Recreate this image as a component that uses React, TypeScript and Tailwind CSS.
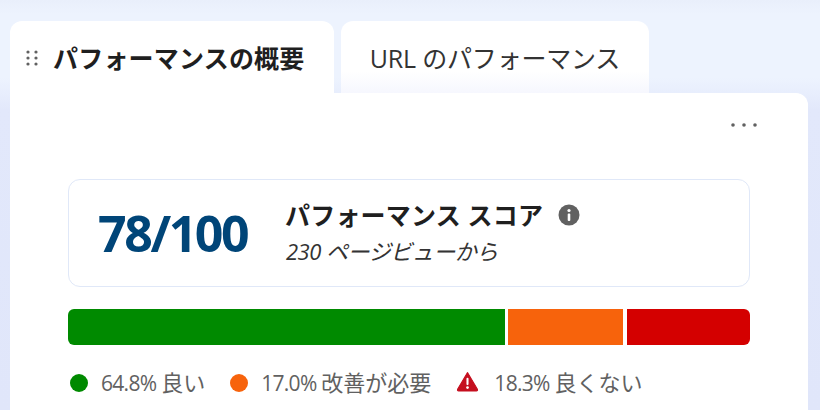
export default function App() {
  const sans = "font-['Open_Sans','Noto_Sans_CJK_JP',sans-serif]";
  const num = "text-[21px] tracking-[-0.7px]";
  return (
    <div className={`h-[410px] w-[820px] overflow-hidden bg-[linear-gradient(180deg,#e9effb_0px,#edf3fe_14px,#edf3fe_78px,#e2e8fb_110px,#e0e6fa_410px)] pl-[10px] pr-[12px] pt-[21px] ${sans}`}>
      <div className="flex h-[72px] items-stretch">
        <div className="flex w-[324px] items-start rounded-t-[12px] bg-white pl-[16px] pt-[22px]">
          <svg width="12" height="18" viewBox="0 0 12 18" className="mt-[6px] text-[#616161]" fill="currentColor">
            <circle cx="2" cy="3" r="1.6" /><circle cx="10" cy="3" r="1.6" />
            <circle cx="2" cy="9" r="1.6" /><circle cx="10" cy="9" r="1.6" />
            <circle cx="2" cy="15" r="1.6" /><circle cx="10" cy="15" r="1.6" />
          </svg>
          <span className="ml-[15px] text-[25px] leading-[30px] font-bold tracking-[0.2px] whitespace-nowrap text-[#1f1f1f]">パフォーマンスの概要</span>
        </div>
        <div className="ml-[7px] flex w-[308px] items-start justify-center rounded-t-[12px] bg-[linear-gradient(180deg,#ffffff_70%,#f6f7fe_100%)] pt-[22px]">
          <span className="text-[25px] leading-[30px] tracking-[-0.2px] whitespace-nowrap text-[#333333]">URL のパフォーマンス</span>
        </div>
      </div>
      <div className="h-[340px] rounded-tr-[12px] bg-white px-[58px]">
        <div className="-mr-[8px] flex h-[86px] justify-end pt-[29px]">
          <svg width="28" height="6" viewBox="0 0 28 6" fill="#616161">
            <circle cx="3" cy="3" r="1.8" /><circle cx="14" cy="3" r="1.8" /><circle cx="25" cy="3" r="1.8" />
          </svg>
        </div>
        <div className="flex h-[108px] items-center rounded-[12px] border border-[#e0e8f8] pl-[29px]">
          <span className="w-[187px] text-[50px] leading-[60px] font-bold tracking-[-2.4px] text-[#004578]">78/100</span>
          <div className="-mt-[1px] flex flex-col">
            <div className="flex items-center">
              <span className="text-[25px] leading-[30px] font-bold tracking-[0.2px] whitespace-nowrap text-[#1f1f1f]">パフォーマンス スコア</span>
              <svg width="22" height="22" viewBox="0 0 22 22" className="ml-[15px]">
                <circle cx="11" cy="11" r="10.5" fill="#616161" />
                <circle cx="11" cy="6.5" r="1.6" fill="#fff" />
                <rect x="9.7" y="9.5" width="2.6" height="7.5" rx="1" fill="#fff" />
              </svg>
            </div>
            <span className="mt-[7px] ml-[1px] text-[22px] leading-[28px] tracking-[-0.5px] whitespace-nowrap text-[#333333] italic">230 ページビューから</span>
          </div>
        </div>
        <div className="mt-[22px] flex h-[36px]">
          <div className="w-[437px] rounded-l-[6px] bg-[#008a00]" />
          <div className="ml-[3px] w-[115px] bg-[#f7630c]" />
          <div className="ml-[4px] w-[123px] rounded-r-[6px] bg-[#d40000]" />
        </div>
        <div className="mt-[23px] flex h-[28px] items-center pl-[2px] text-[22px] leading-[28px] whitespace-nowrap text-[#616161]">
          <span className="mt-[2px] h-[18px] w-[18px] rounded-full bg-[#008a00]" />
          <span className="ml-[13px]"><span className={num}>64.8% </span>良い</span>
          <span className="mt-[2px] ml-[25px] h-[18px] w-[18px] rounded-full bg-[#f7630c]" />
          <span className="ml-[13px]"><span className={num}>17.0% </span>改善が必要</span>
          <svg width="23" height="21" viewBox="0 0 22 20" className="ml-[25px] mb-[2px]">
            <path d="M11 1.5 L20.5 17.5 Q21 19 19.5 19 L2.5 19 Q1 19 1.5 17.5 Z" fill="#c50f1f" stroke="#c50f1f" strokeLinejoin="round" />
            <rect x="10" y="6.5" width="2" height="7" rx="1" fill="#fff" />
            <circle cx="11" cy="15.8" r="1.3" fill="#fff" />
          </svg>
          <span className="ml-[15px]"><span className={num}>18.3% </span>良くない</span>
        </div>
      </div>
    </div>
  );
}
